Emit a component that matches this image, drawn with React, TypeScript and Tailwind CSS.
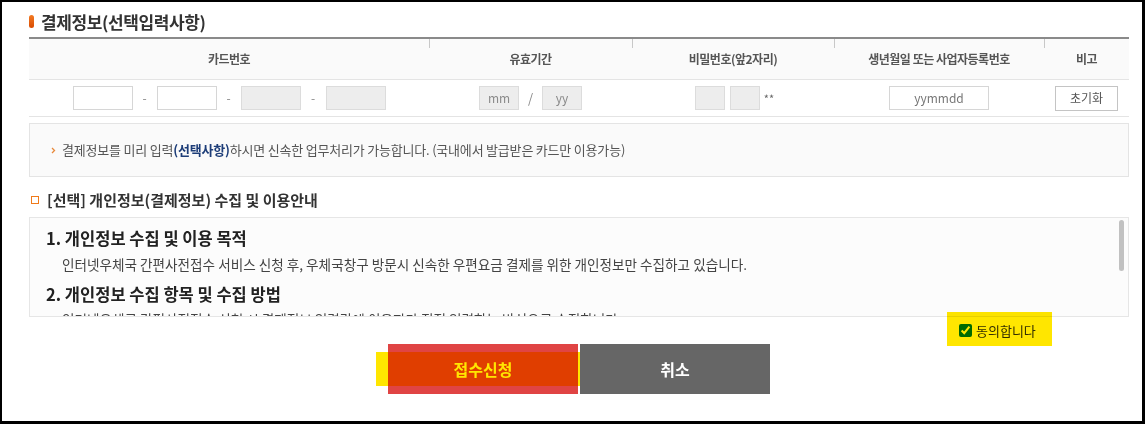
const cols = "grid grid-cols-[400px_203px_202px_210px_85px]";

function HeadCell({ label, divider }: { label: string; divider?: boolean }) {
  return (
    <div className="relative flex items-center justify-center">
      {divider && <span className="absolute left-0 top-0 h-[9px] w-px bg-[#c8c8c8]" />}
      <span className="text-[12px] font-bold tracking-[-0.5px] text-[#555]">{label}</span>
    </div>
  );
}

function Box({ gray, w, text }: { gray?: boolean; w: string; text?: string }) {
  return (
    <div
      className={`flex h-[24px] items-center justify-center border text-[12px] ${w} ${
        gray ? "border-[#dcdcdc] bg-[#ededed] text-[#8a8a8a]" : "border-[#d6d6d6] bg-white text-[#777]"
      }`}
    >
      {text}
    </div>
  );
}

export default function App() {
  return (
    <div className="h-[424px] w-[1145px] overflow-hidden border-b-[3px] border-l-2 border-r-[3px] border-t-2 border-black bg-white font-['Noto_Sans_CJK_KR','Noto_Sans',sans-serif]">
      <div className="pl-[27px] pr-[13px]">
        {/* Title */}
        <div className="flex h-[35px] items-center gap-[7px] pt-[4px]">
          <span className="h-[13px] w-[5px] rounded-full bg-gradient-to-b from-[#f27a22] to-[#d94a00]" />
          <h2 className="text-[17px] font-bold leading-[20px] tracking-[-0.4px] text-[#333]">결제정보(선택입력사항)</h2>
        </div>

        {/* Card table */}
        <div className="border-t-2 border-[#8a8a8a]">
          <div className={`${cols} h-[41px] border-b border-[#e4e4e4] bg-[#fafafa]`}>
            <HeadCell label="카드번호" />
            <HeadCell label="유효기간" divider />
            <HeadCell label="비밀번호(앞2자리)" divider />
            <HeadCell label="생년월일 또는 사업자등록번호" divider />
            <HeadCell label="비고" divider />
          </div>
          <div className={`${cols} h-[37px] border-b border-[#e4e4e4]`}>
            <div className="flex items-center justify-center">
              <Box w="w-[60px]" />
              <span className="w-[24px] text-center text-[12px] text-[#888]">-</span>
              <Box w="w-[60px]" />
              <span className="w-[24px] text-center text-[12px] text-[#888]">-</span>
              <Box w="w-[60px]" gray />
              <span className="w-[25px] text-center text-[12px] text-[#888]">-</span>
              <Box w="w-[60px]" gray />
            </div>
            <div className="flex items-center justify-center">
              <Box w="w-[40px]" gray text="mm" />
              <span className="w-[23px] text-center text-[13px] text-[#888]">/</span>
              <Box w="w-[40px]" gray text="yy" />
            </div>
            <div className="flex items-center justify-center pl-[3px]">
              <Box w="w-[30px]" gray />
              <span className="w-[5px]" />
              <Box w="w-[30px]" gray />
              <span className="ml-[4px] text-[11px] text-[#666]">**</span>
            </div>
            <div className="flex items-center justify-center">
              <Box w="w-[100px]" text="yymmdd" />
            </div>
            <div className="flex items-center justify-center">
              <button className="h-[25px] w-[63px] border border-[#c4c4c4] bg-white text-[12px] text-[#555]">초기화</button>
            </div>
          </div>
        </div>

        {/* Notice */}
        <div className="mt-[6px] flex h-[54px] items-center border border-[#e4e4e4] bg-[#fafafa] pl-[21px] text-[13px] tracking-[-0.2px] text-[#555]">
          <svg width="5" height="7" viewBox="0 0 5 7" className="mr-[6px]">
            <path d="M1 1l2.5 2.5L1 6" fill="none" stroke="#e8893a" strokeWidth="1.3" />
          </svg>
          <p>
            결제정보를 미리 입력<b className="text-[#1d3d78]">(선택사항)</b>하시면 신속한 업무처리가 가능합니다. (국내에서 발급받은 카드만 이용가능)
          </p>
        </div>

        {/* Privacy heading */}
        <div className="mt-[14px] flex h-[18px] items-center gap-[8px] pl-[2px]">
          <span className="h-[8px] w-[8px] border-[1.5px] border-[#f07a1a]" />
          <h3 className="text-[15px] font-bold text-[#333]">[선택] 개인정보(결제정보) 수집 및 이용안내</h3>
        </div>

        {/* Privacy scroll box */}
        <div className="relative mt-[8px] h-[100px] overflow-hidden border border-[#e6e6e6] bg-[#fcfcfc] pl-[16px] pt-[9px]">
          <h4 className="text-[16.5px] font-bold leading-[22px] text-[#222]">1. 개인정보 수집 및 이용 목적</h4>
          <p className="mt-[5px] pl-[16px] text-[13.6px] leading-[20px] text-[#444]">
            인터넷우체국 간편사전접수 서비스 신청 후, 우체국창구 방문시 신속한 우편요금 결제를 위한 개인정보만 수집하고 있습니다.
          </p>
          <h4 className="mt-[9px] text-[16.5px] font-bold leading-[22px] text-[#222]">2. 개인정보 수집 항목 및 수집 방법</h4>
          <p className="mt-[4px] pl-[16px] text-[13.6px] leading-[20px] text-[#444]">
            인터넷우체국 간편사전접수 신청 시 결제정보 입력란에 이용자가 직접 입력하는 방식으로 수집합니다.
          </p>
          <span className="absolute right-[4px] top-[2px] h-[51px] w-[5px] rounded-full bg-[#c1c1c1]" />
        </div>

        {/* Agree */}
        <div className="relative flex h-[27px] items-center pl-[930px]">
          <label className="flex items-center gap-[4px] text-[13px] text-[#333]">
            <input type="checkbox" checked readOnly className="m-0 h-[13px] w-[13px]" />
            동의합니다
          </label>
          <span className="pointer-events-none absolute left-[918px] top-[-5px] h-[34px] w-[105px] bg-[#ffe600] mix-blend-multiply" />
        </div>

        {/* Buttons */}
        <div className="relative flex justify-center gap-[2px]">
          <button className="h-[50px] w-[190px] bg-[#e04444] text-[16px] font-bold text-white">접수신청</button>
          <button className="h-[50px] w-[190px] bg-[#666] text-[16px] font-bold text-white">취소</button>
          <span className="pointer-events-none absolute left-[347px] top-[8px] h-[34px] w-[204px] bg-[#ffe600] mix-blend-multiply" />
        </div>
      </div>
    </div>
  );
}
